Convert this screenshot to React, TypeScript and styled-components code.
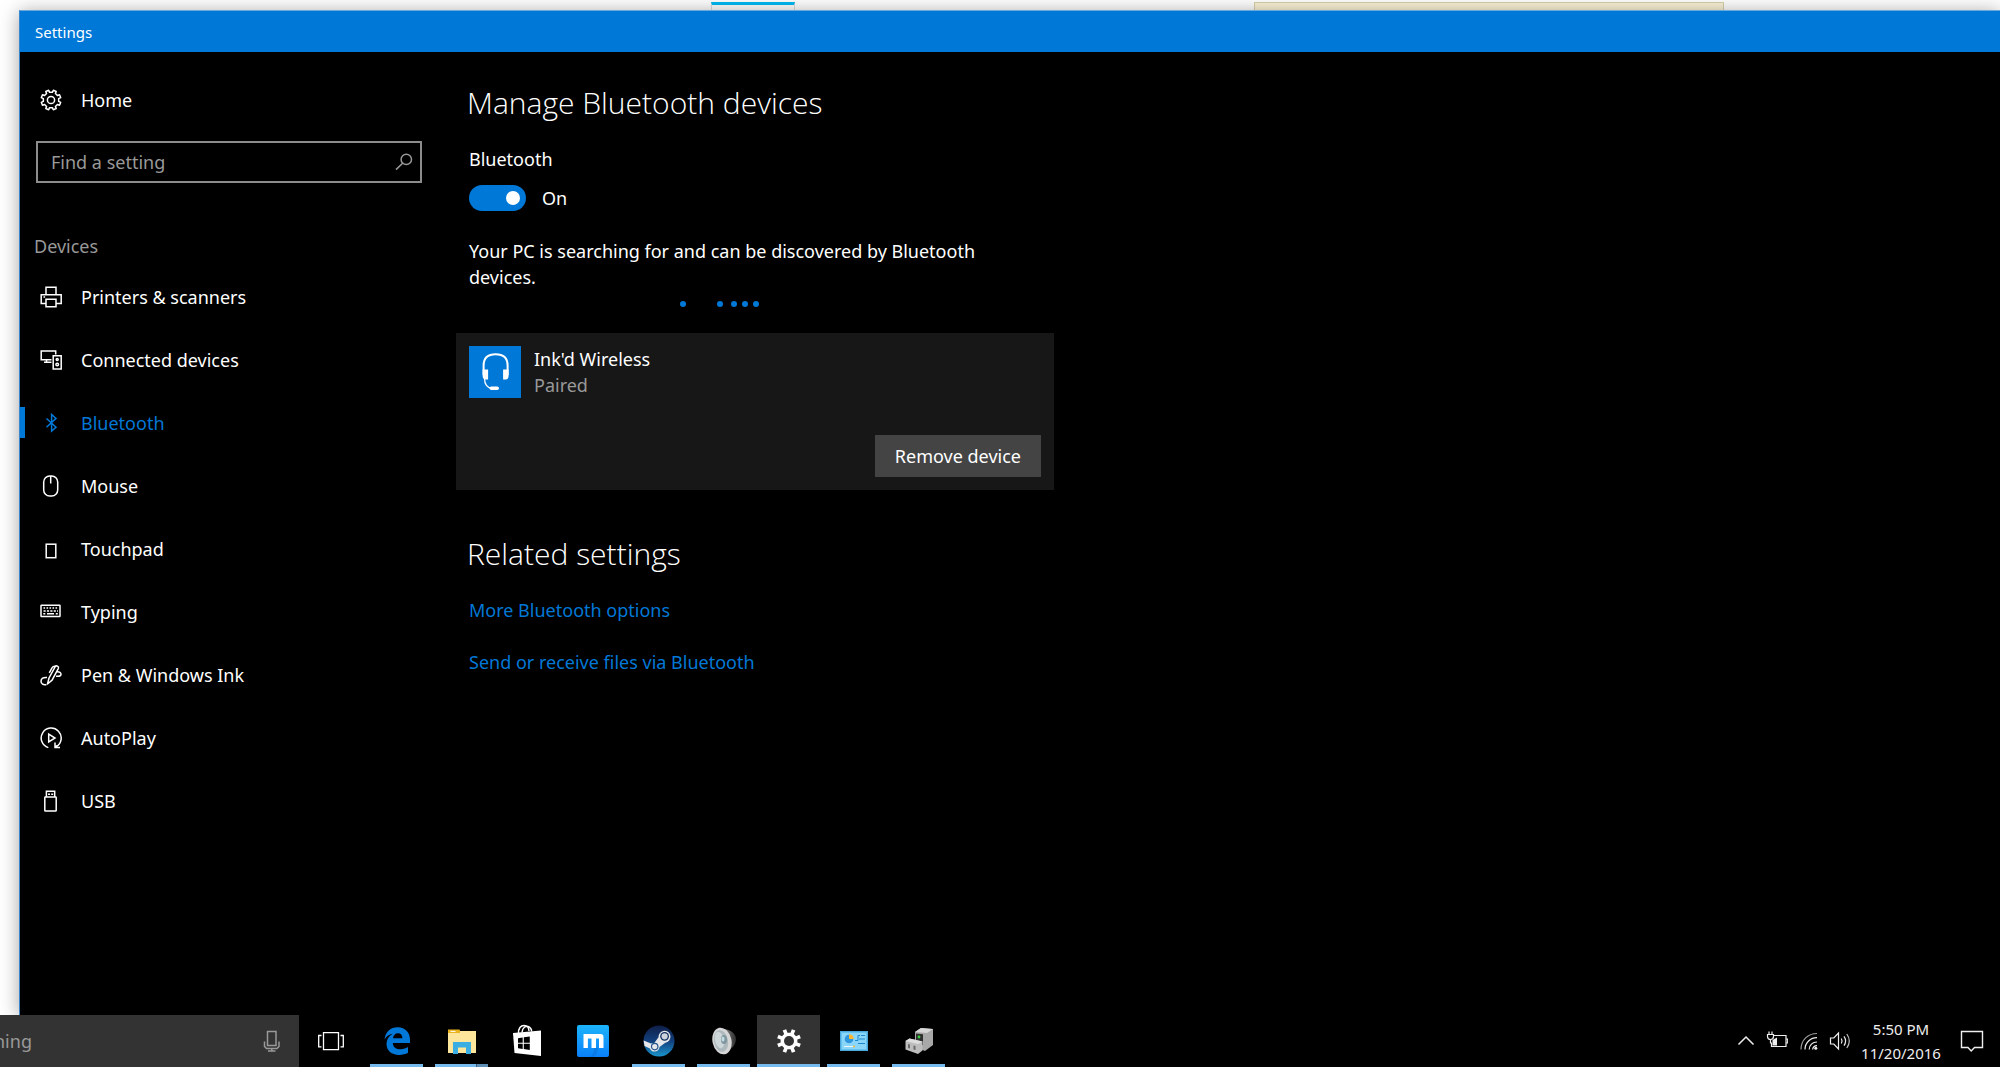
import React from "react";
import styled, { createGlobalStyle } from "styled-components";

const ACCENT = "#0078d7";

const GlobalStyle = createGlobalStyle`
  *, *::before, *::after { box-sizing: border-box; }
  html, body { margin: 0; background: #fff; overflow: hidden; }
  body, input, button {
    font-family: "Noto Sans", "Open Sans", sans-serif;
    font-size: 18px;
    line-height: 26px;
  }
  h1, h2, p, ul { margin: 0; padding: 0; font-weight: 400; }
  ul { list-style: none; }
  a { color: inherit; text-decoration: none; }
  svg { display: block; flex: none; }
`;

const Desktop = styled.div`
  display: flex;
  flex-direction: column;
  height: 100vh;
  background: #fff;
  color: #fff;
`;

const Backdrop = styled.div`
  position: relative;
  display: flex;
  flex: 1;
  min-height: 0;
  padding: 10px 0 0 19px;
  overflow: hidden;
`;

const TabMark = styled.div`
  position: absolute;
  top: 2px;
  left: 711px;
  width: 84px;
  height: 20px;
  border: 1px solid #ddd;
  border-top: 3px solid #00b9f2;
`;

const NoteEdge = styled.div`
  position: absolute;
  top: 2px;
  left: 1254px;
  width: 470px;
  height: 20px;
  border: 1px solid #d6d2ac;
  background: #fbf3d6;
`;

const Window = styled.main`
  position: relative;
  display: flex;
  flex: 1;
  flex-direction: column;
  min-width: 0;
  border-left: 1px solid #3a86cc;
  border-top: 1px solid #6aa9dc;
  background: #000;
  box-shadow: 0 2px 18px rgba(0, 0, 0, 0.36);
`;

const TitleBar = styled.header`
  display: flex;
  align-items: center;
  height: 41px;
  padding: 0 15px;
  background: ${ACCENT};
  font-size: 15px;
`;

const Body = styled.div`
  display: flex;
  flex: 1;
  gap: 34px;
  min-height: 0;
`;

const Sidebar = styled.nav`
  display: flex;
  flex: 0 0 402px;
  flex-direction: column;
  padding-top: 24px;
`;

const NavLink = styled.a<{ $active?: boolean; $height: number }>`
  display: flex;
  align-items: center;
  gap: 19px;
  height: ${(p) => p.$height}px;
  padding-left: 20px;
  color: ${(p) => (p.$active ? ACCENT : "#fff")};
  background: linear-gradient(${ACCENT}, ${ACCENT}) no-repeat left center /
    ${(p) => (p.$active ? "5px 31px" : "0 0")};
`;

const SearchBox = styled.label`
  display: flex;
  align-items: center;
  height: 42px;
  margin: 17px 0 0 16px;
  padding: 0 7px 0 13px;
  border: 2px solid #8c8c8c;
  color: #999;
`;

const PlainInput = styled.input`
  flex: 1;
  min-width: 0;
  padding: 0;
  border: 0;
  outline: 0;
  background: transparent;
  color: #fff;
  &::placeholder { color: #999; opacity: 1; }
`;

const GroupTitle = styled.h2`
  margin: 50px 0 6px 14px;
  color: #999;
  font-size: 18px;
`;

const Content = styled.section`
  flex: 1;
  min-width: 0;
  padding-top: 31px;
`;

const Heading = styled.h1`
  padding-left: 11px;
  font-family: "Open Sans", "Noto Sans", sans-serif;
  font-size: 30px;
  font-weight: 300;
  line-height: 40px;
`;

const Block = styled.div<{ $top: number }>`
  display: flex;
  flex-direction: column;
  max-width: 560px;
  margin-top: ${(p) => p.$top}px;
  padding-left: 13px;
`;

const ToggleRow = styled.div`
  display: flex;
  align-items: center;
  gap: 16px;
  margin-top: 13px;
`;

const Toggle = styled.input`
  appearance: none;
  display: flex;
  align-items: center;
  justify-content: flex-end;
  width: 57px;
  height: 26px;
  margin: 0;
  padding-right: 6px;
  border-radius: 13px;
  background: ${ACCENT};
  &::after {
    content: "";
    width: 14px;
    height: 14px;
    border-radius: 50%;
    background: #fff;
  }
`;

const Dots = styled.div`
  display: flex;
  max-width: 598px;
  height: 6px;
  margin-top: 11px;
  padding-left: 224px;
`;

const Dot = styled.span<{ $gap: number }>`
  width: 6px;
  height: 6px;
  margin-right: ${(p) => p.$gap}px;
  border-radius: 50%;
  background: ${ACCENT};
`;

const Card = styled.article`
  display: flex;
  flex-direction: column;
  max-width: 598px;
  margin-top: 26px;
  padding: 13px;
  background: #171717;
`;

const Device = styled.div`
  display: flex;
  gap: 13px;
`;

const DeviceIcon = styled.div`
  display: grid;
  place-items: center;
  width: 52px;
  height: 52px;
  background: ${ACCENT};
`;

const Muted = styled.p`
  color: #999;
`;

const RemoveButton = styled.button`
  align-self: flex-end;
  height: 42px;
  margin-top: 37px;
  padding: 0 20px;
  border: 0;
  background: #444;
  color: #fff;
`;

const Related = styled.section`
  margin-top: 44px;
`;

const LinkList = styled.ul`
  display: grid;
  gap: 26px;
  margin-top: 23px;
  padding-left: 13px;
  color: ${ACCENT};
`;

const Taskbar = styled.footer`
  position: relative;
  display: flex;
  height: 52px;
  background: #000;
`;

const CortanaBox = styled.label`
  display: flex;
  align-items: center;
  width: 299px;
  padding-right: 16px;
  overflow: hidden;
  background: #333;
  color: #999;
`;

const CortanaInput = styled(PlainInput)`
  margin-left: -6px;
`;

const Apps = styled.div`
  display: flex;
  gap: 2px;
  flex: 1;
`;

const AppButton = styled.button<{ $line?: string; $active?: boolean }>`
  display: grid;
  place-items: center;
  width: ${(p) => (p.$line === undefined ? 64 : 63)}px;
  padding: 0;
  border: 0;
  background-color: ${(p) => (p.$active ? "#333" : "transparent")};
  background-image: ${(p) => p.$line ?? "none"};
  background-repeat: no-repeat;
  background-position: center bottom;
  background-size: ${(p) => (p.$active ? "100%" : "53px")} 3px;
  color: #fff;
`;

const Tray = styled.div`
  display: flex;
  align-items: center;
  padding-right: 3px;
`;

const TrayButton = styled.button<{ $width: number }>`
  display: grid;
  place-items: center;
  width: ${(p) => p.$width}px;
  height: 52px;
  padding: 0;
  border: 0;
  background: transparent;
  color: #eee;
`;

const Clock = styled(TrayButton)`
  align-content: end;
  padding-bottom: 2px;
  font-size: 15px;
  line-height: 24px;
`;

const BLUE_LINE = "linear-gradient(#76b9ed, #76b9ed)";
const STACKED_LINE = "linear-gradient(90deg, #76b9ed 41px, #3c5e7a 41px, #3c5e7a 42px, #5d8fb6 42px)";

function gearPath(c: number, inner: number, outer: number, teeth: number) {
  const step = (Math.PI * 2) / teeth;
  const at = (r: number, a: number) =>
    `${(c + r * Math.cos(a)).toFixed(2)} ${(c + r * Math.sin(a)).toFixed(2)}`;
  let d = "";
  for (let i = 0; i < teeth; i++) {
    const a = i * step + step / 2;
    d += `${i ? "L" : "M"}${at(inner, a - step * 0.27)}L${at(outer, a - step * 0.2)}L${at(outer, a + step * 0.2)}L${at(inner, a + step * 0.27)}`;
  }
  return d + "Z";
}

type IconProps = { children: React.ReactNode; size?: number; stroke?: number };
const Icon = ({ children, size = 22, stroke = 1.5 }: IconProps) => (
  <svg width={size} height={size} viewBox={`0 0 ${size} ${size}`} fill="none" stroke="currentColor" strokeWidth={stroke} aria-hidden="true">
    {children}
  </svg>
);

const GearOutline = () => (
  <Icon>
    <path d={gearPath(11, 7.8, 10, 8)} strokeLinejoin="round" />
    <circle cx="11" cy="11" r="3.6" />
  </Icon>
);
const Printer = () => (
  <Icon>
    <path d="M6 8.5V1.2h10v7.3M5.5 17.5H1.2V8.7h20v8.8h-4.5M6 13.2h10v7.6H6z" />
    <path d="M3.5 11h1.6" />
  </Icon>
);
const Connected = () => (
  <Icon>
    <path d="M11.5 10.8H1.2V2h14.5v3.5M6.5 10.8v2.7M4 13.3h7.5M13.2 6.8h8V20h-8z" />
    <circle cx="17.2" cy="10.5" r="1" />
    <circle cx="17.2" cy="15.5" r="1.3" />
  </Icon>
);
const BluetoothGlyph = () => (
  <Icon>
    <path d="M6.5 6.5l9.5 8.8-4.4 3.8V2.5L16 6.4l-9.5 8.9" />
  </Icon>
);
const Mouse = () => (
  <Icon>
    <rect x="3.7" y="1" width="14" height="20" rx="6" />
    <path d="M10.7 1v7.5" />
  </Icon>
);
const Touchpad = () => (
  <Icon>
    <rect x="6.2" y="6.2" width="9.6" height="13.5" />
  </Icon>
);
const Keyboard = () => (
  <Icon>
    <rect x="1" y="4.3" width="19" height="11.2" rx="0.5" />
    <path d="M3.5 7.1h14.5" strokeDasharray="1.6 1.4" />
    <path d="M3.5 9.9h14.5" strokeDasharray="2.2 1.2" />
    <path d="M3.3 12.800h2M7 12.800h7M15.800 12.800h2" />
  </Icon>
);
const Pen = () => (
  <Icon>
    <path d="M7.500 20l1.500-6L15.200 2.600c.9-1.600 4-.1 3.200 1.700l-6.300 11.900z" strokeLinejoin="round" />
    <path d="M6.500 20.500c-3.300.7-5.500-.6-5.500-3.200 0-2.700 2.400-4.200 6-3.800M15.200 2.200c-1.400-.2-2.400.4-3.200 1.700L9.300 8.800M16.800 7.800c2.500-.3 4.400.8 4.200 2.600-.2 1.500-1.800 2.200-5 1.800" />
  </Icon>
);
const AutoPlay = () => (
  <Icon>
    <path d="M8.300 20.600A10 10 0 1 1 16 19.800" />
    <path d="M15 15.500v5h5M15 20.500l2-2M8.700 7.200v7.600l6.300-3.800z" />
  </Icon>
);
const Usb = () => (
  <Icon>
    <rect x="4.800" y="7" width="11.400" height="14" rx="0.600" />
    <path d="M6.400 7V1.200h8.300V7M8 4.200h2M11.200 4.200h2" />
  </Icon>
);
const Magnifier = () => (
  <Icon size={18}>
    <circle cx="11.300" cy="6.400" r="5.200" />
    <path d="M7.600 10.200L1 16.600" />
  </Icon>
);
const Headset = () => (
  <svg width="36" height="42" viewBox="0 0 36 42" fill="none" stroke="#fff" aria-hidden="true">
    <path d="M6.600 24V14.500C6.600 6.500 11.500 3.200 18.600 3.200s12 3.300 12 11.300V24" strokeWidth="2" />
    <path d="M7.500 27c0 6.500 2 10 8 10.300" strokeWidth="1.300" />
    <path d="M5.600 18.500h5.500v10H8.500q-2.900 0-2.900-4zM31.600 18.500h-5.500v10h2.600q2.900 0 2.900-4z" fill="#fff" stroke="none" />
    <rect x="12.500" y="35.500" width="9.500" height="3.600" rx="1.800" fill="#fff" stroke="none" />
  </svg>
);

const Mic = () => (
  <Icon size={22}>
    <rect x="6.500" y="1.500" width="8.500" height="14" />
    <path d="M3.500 11.500v5l2 2h10.500l2-2v-5M10.800 18.500v3M7 21h7.500" />
  </Icon>
);
const TaskView = () => (
  <Icon size={28} stroke={1.3}>
    <path d="M6.500 5.700h15v17h-15zM4.500 8.500H1.700v11.300h2.800M23.500 8.500h2.800v11.300h-2.800" />
  </Icon>
);
const Edge = () => (
  <svg width="28" height="28" viewBox="0 0 28 28" aria-hidden="true">
    <path fill={ACCENT} d="M1.500 12.400C2.500 4.600 7.500.2 14.600.2 22.600.2 27 5.800 27 12.600v3.300H9.800c.2 4.300 3.300 6.300 7.800 6.300 2.900 0 5.200-.8 7.400-2.100v5.700c-2.500 1.400-5.400 2.100-8.800 2.100C8.400 27.900 3.500 23.600 3.500 17c0-4.500 2.300-8 6.100-10.300C5.800 7.500 3.200 9.600 1.500 12.400zM10 11.300h9.400c0-3.100-1.700-5-4.400-5-2.900 0-4.700 2.100-5 5z" />
  </svg>
);
const Explorer = () => (
  <svg width="30" height="26" viewBox="0 0 30 26" aria-hidden="true">
    <path fill="#eab420" d="M1 1.500h11.500l1.500 4H1z" />
    <path fill="#fde69b" d="M13 3h16v22H1V5h12z" />
    <path fill="#eab420" d="M3 2.500h8v2H3z" />
    <path fill="#3aaee2" d="M6 14h18v12h-5v-6.500h-8V26H6z" />
    <path fill="#fff" d="M3.500 2.900h5v1h-5z" />
  </svg>
);
const Store = () => (
  <svg width="30" height="34" viewBox="0 0 30 34" aria-hidden="true">
    <path fill="none" stroke="#fff" strokeWidth="1.500" d="M6.500 10C6 4 9 1.500 12 1.500S17 4 17 7M10 8.500C10.500 3 14 2 16 2.500s4 3 3.500 5" />
    <path fill="#fff" d="M1 9l28-2.500V32L2.500 29z" />
    <path fill="#000" d="M6 14.200l4.700-.7v5.200H6zM11.800 13.300l6-.9v6.300h-6zM6 19.800h4.700V25L6 24.300zM11.800 19.800h6V26l-6-.9z" />
  </svg>
);
const Maxthon = () => (
  <svg width="32" height="32" viewBox="0 0 32 32" aria-hidden="true">
    <defs>
      <linearGradient id="mx" x1="0" y1="0" x2="0" y2="1">
        <stop offset="0" stopColor="#1cb4fb" />
        <stop offset="1" stopColor="#0a80fa" />
      </linearGradient>
    </defs>
    <rect width="32" height="32" rx="2" fill="url(#mx)" />
    <path fill="#0a72d8" opacity=".6" d="M17 23h4c0 4-2 7-5 9h-3c3-3 4-5 4-9z" />
    <path fill="#fff" d="M6.500 9h17q3 0 3 3v11H22V13.500h-3V23h-4.500v-9.500h-3.600V23H6.500z" />
  </svg>
);
const Steam = () => (
  <svg width="32" height="32" viewBox="0 0 32 32" aria-hidden="true">
    <defs>
      <linearGradient id="st" x1="0" y1="0" x2="0" y2="1">
        <stop offset="0" stopColor="#101f48" />
        <stop offset=".5" stopColor="#123f7d" />
        <stop offset="1" stopColor="#1a94cc" />
      </linearGradient>
    </defs>
    <circle cx="16" cy="16" r="15.500" fill="url(#st)" />
    <path fill="#e4e6ea" d="M.6 15.500L8 18.600c1-.6 2.200-.8 3.300-.6l4.200-5.800a6 6 0 1 1 6.800 5.500L16.500 22a5 5 0 0 1-9.600 1.500L1.500 21z" />
    <circle cx="21.600" cy="11.300" r="4.400" fill="#12305f" />
    <circle cx="21.600" cy="11.300" r="3.100" fill="#cdd3dc" />
    <circle cx="11.700" cy="21.600" r="3.200" fill="none" stroke="#24548c" strokeWidth="1.200" />
  </svg>
);
const Speaker = () => (
  <svg width="28" height="30" viewBox="0 0 28 30" aria-hidden="true">
    <defs>
      <linearGradient id="sp" x1="0" y1="0" x2="1" y2="0">
        <stop offset="0" stopColor="#8a8a8a" />
        <stop offset="1" stopColor="#2c2c2c" />
      </linearGradient>
    </defs>
    <path fill="url(#sp)" d="M13 3c6 0 13 4 13 10s-5 11-11 13z" />
    <ellipse cx="12" cy="15" rx="9.500" ry="13.500" fill="#d6d6d6" transform="rotate(-12 12 15)" />
    <ellipse cx="11" cy="15" rx="7" ry="11" fill="#aeb9bd" transform="rotate(-12 11 15)" />
    <ellipse cx="9.500" cy="14" rx="4.500" ry="8.500" fill="#cdd6d9" transform="rotate(-12 9.500 14)" />
    <ellipse cx="14" cy="13.500" rx="3" ry="4.500" fill="#7f979f" />
    <ellipse cx="13" cy="13" rx="1.500" ry="2.500" fill="#c5dbe2" />
  </svg>
);
const GearSolid = () => (
  <svg width="26" height="26" viewBox="0 0 26 26" aria-hidden="true">
    <path d={gearPath(13, 8.5, 12.2, 8)} fill="#fff" />
    <circle cx="13" cy="13" r="5" fill="#333" />
  </svg>
);
const ControlPanel = () => (
  <svg width="28" height="20" viewBox="0 0 28 20" aria-hidden="true">
    <rect x=".5" y=".5" width="27" height="19" fill="#66c3f0" stroke="#4aa8dc" />
    <rect x="2" y="2" width="24" height="16" fill="#8ad6f8" />
    <circle cx="9" cy="8" r="4.300" fill="#2f97e0" />
    <path fill="#f7b733" d="M9 8V3.200a4.800 4.800 0 0 1 4.800 4.800z" />
    <path fill="none" stroke="#1d86cf" d="M15 9.500h3v-5h2M19 8h2M18 12.500h7M21 4.500h4M21 8h4" />
    <path stroke="#e9f8ff" d="M4 15.500h9" />
    <circle cx="14" cy="15.500" r="1" fill="#f7b733" />
  </svg>
);
const DeviceBox = () => (
  <svg width="28" height="28" viewBox="0 0 28 28" aria-hidden="true">
    <path fill="#a8a8a8" d="M10 5l6-4 12 1v16l-8 6-10-4z" />
    <path fill="#d6d6d6" d="M10 5l6-4 12 1-6 4z" />
    <path fill="#2f2f2f" d="M11 6.500l7 .7v11l-7-2z" />
    <circle cx="14" cy="10" r="1.400" fill="#35d23c" />
    <path fill="#bdbdbd" d="M.5 14l4-2.500 13 3v9L13 27 .5 22.500z" />
    <path fill="#dedede" d="M.5 14l4-2.500 13 3-4.500 2.500z" />
    <path fill="#6a6a6a" d="M3 17l2 .5v4L3 21zM8.500 18.500l2 .5v4l-2-.5z" />
  </svg>
);

const Chevron = () => (
  <Icon size={18}>
    <path d="M1.500 12.500L9 5l7.500 7.500" />
  </Icon>
);
const Battery = () => (
  <Icon size={22} stroke={1.2}>
    <path d="M8 5.500h12v11H5.500v-4M20.500 9h1.200v4h-1.200" />
    <path d="M3 1.500v3M6 1.500v3M1.500 4.500h6v2c0 2-1.200 3-3 3s-3-1-3-3zM4.500 9.500v4" />
    <path d="M6.500 10l4.500-2.500v8H6.500z" fill="currentColor" stroke="none" />
  </Icon>
);
const Wifi = () => (
  <Icon size={20} stroke={1.2}>
    <path d="M2 18.500C2 9 9 2.500 18 2.500" opacity=".65" />
    <path d="M6 18.500C6 11.500 11.500 6.700 18 6.700M10.200 18.500C10.200 14 13.500 11 18 11M13.700 18.500c0-2.300 1.700-3.800 4.300-3.800" />
    <circle cx="16.800" cy="17.300" r="1.500" fill="currentColor" stroke="none" />
  </Icon>
);
const Volume = () => (
  <Icon size={22} stroke={1.2}>
    <path d="M1.500 8h3.300L9.500 3v16l-4.700-5H1.500zM12.300 8.500q1.500 2.500 0 5M15 6.300q3.200 4.700 0 9.400" />
    <path d="M17.800 4q5 7 0 14" opacity=".8" />
  </Icon>
);
const ActionCenter = () => (
  <Icon size={24} stroke={1.4}>
    <path d="M1.500 2.500h21v16h-8L11.200 22l-3.200-3.500H1.500z" />
  </Icon>
);

const NAV: { label: string; icon: React.ReactNode; active?: boolean }[] = [
  { label: "Printers & scanners", icon: <Printer /> },
  { label: "Connected devices", icon: <Connected /> },
  { label: "Bluetooth", icon: <BluetoothGlyph />, active: true },
  { label: "Mouse", icon: <Mouse /> },
  { label: "Touchpad", icon: <Touchpad /> },
  { label: "Typing", icon: <Keyboard /> },
  { label: "Pen & Windows Ink", icon: <Pen /> },
  { label: "AutoPlay", icon: <AutoPlay /> },
  { label: "USB", icon: <Usb /> },
];

const APPS: { name: string; icon: React.ReactNode; line?: string; active?: boolean }[] = [
  { name: "Task View", icon: <TaskView /> },
  { name: "Microsoft Edge", icon: <Edge />, line: BLUE_LINE },
  { name: "File Explorer", icon: <Explorer />, line: STACKED_LINE },
  { name: "Store", icon: <Store /> },
  { name: "Maxthon", icon: <Maxthon /> },
  { name: "Steam", icon: <Steam />, line: BLUE_LINE },
  { name: "Sound", icon: <Speaker />, line: BLUE_LINE },
  { name: "Settings", icon: <GearSolid />, line: BLUE_LINE, active: true },
  { name: "Control Panel", icon: <ControlPanel />, line: BLUE_LINE },
  { name: "Devices and Printers", icon: <DeviceBox />, line: BLUE_LINE },
];

const DOT_GAPS = [31, 8, 5, 5, 0];

export default function App() {
  return (
    <Desktop>
      <GlobalStyle />
      <Backdrop>
        <TabMark />
        <NoteEdge />
        <Window>
          <TitleBar>Settings</TitleBar>
          <Body>
            <Sidebar>
              <NavLink href="#home" $height={48}>
                <GearOutline />
                Home
              </NavLink>
              <SearchBox>
                <PlainInput type="text" placeholder="Find a setting" aria-label="Find a setting" />
                <Magnifier />
              </SearchBox>
              <GroupTitle>Devices</GroupTitle>
              <ul>
                {NAV.map((item) => (
                  <li key={item.label}>
                    <NavLink href="#" $height={63} $active={item.active}>
                      {item.icon}
                      {item.label}
                    </NavLink>
                  </li>
                ))}
              </ul>
            </Sidebar>
            <Content>
              <Heading>Manage Bluetooth devices</Heading>
              <Block $top={23}>
                <label htmlFor="bluetooth">Bluetooth</label>
                <ToggleRow>
                  <Toggle id="bluetooth" type="checkbox" role="switch" defaultChecked />
                  <span>On</span>
                </ToggleRow>
              </Block>
              <Block $top={27}>
                <p>Your PC is searching for and can be discovered by Bluetooth devices.</p>
              </Block>
              <Dots>
                {DOT_GAPS.map((gap, i) => (
                  <Dot key={i} $gap={gap} />
                ))}
              </Dots>
              <Card>
                <Device>
                  <DeviceIcon>
                    <Headset />
                  </DeviceIcon>
                  <div>
                    <p>Ink'd Wireless</p>
                    <Muted>Paired</Muted>
                  </div>
                </Device>
                <RemoveButton type="button">Remove device</RemoveButton>
              </Card>
              <Related>
                <Heading as="h2">Related settings</Heading>
                <LinkList>
                  <li>
                    <a href="#options">More Bluetooth options</a>
                  </li>
                  <li>
                    <a href="#files">Send or receive files via Bluetooth</a>
                  </li>
                </LinkList>
              </Related>
            </Content>
          </Body>
        </Window>
      </Backdrop>
      <Taskbar>
        <CortanaBox>
          <CortanaInput type="text" placeholder="hing" aria-label="Search" />
          <Mic />
        </CortanaBox>
        <Apps>
          {APPS.map((app) => (
            <AppButton key={app.name} type="button" aria-label={app.name} $line={app.line} $active={app.active}>
              {app.icon}
            </AppButton>
          ))}
        </Apps>
        <Tray>
          <TrayButton $width={31} type="button" aria-label="Show hidden icons">
            <Chevron />
          </TrayButton>
          <TrayButton $width={32} type="button" aria-label="Battery">
            <Battery />
          </TrayButton>
          <TrayButton $width={32} type="button" aria-label="Network">
            <Wifi />
          </TrayButton>
          <TrayButton $width={30} type="button" aria-label="Volume">
            <Volume />
          </TrayButton>
          <Clock $width={92} type="button">
            <span>5:50 PM</span>
            <span>11/20/2016</span>
          </Clock>
          <TrayButton $width={50} type="button" aria-label="Notifications">
            <ActionCenter />
          </TrayButton>
        </Tray>
      </Taskbar>
    </Desktop>
  );
}
